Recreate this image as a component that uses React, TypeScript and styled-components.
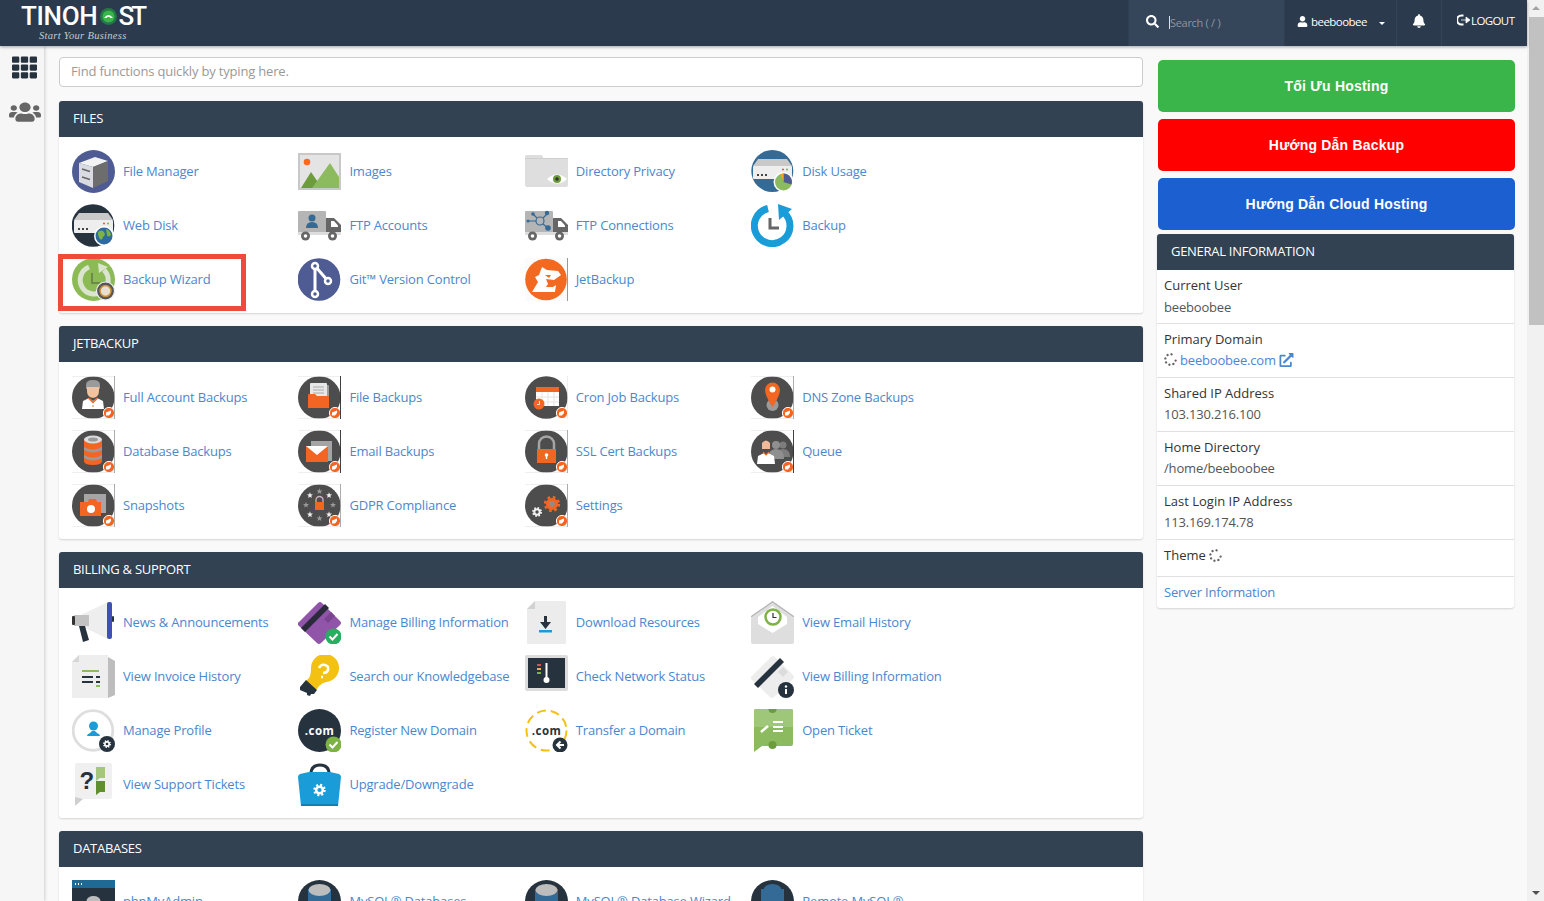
import React from "react";
import styled, { createGlobalStyle } from "styled-components";
import { FaTh, FaUsers, FaSearch, FaUser, FaBell, FaSpinner, FaExternalLinkAlt } from "react-icons/fa";

const GlobalStyle = createGlobalStyle`
  html, body { margin: 0; padding: 0; height: 100%; overflow: hidden; }
  body { font-family: "Open Sans", "Liberation Sans", sans-serif; font-size: 13px; letter-spacing: -0.18px; color: #333; background: #f9f9f9; }
  * { box-sizing: border-box; }
`;

/* ---------- icons ---------- */

const IconSvg = styled.svg`
  width: 43px;
  height: 43px;
  flex: none;
`;

const SvgText = styled.text<{ $dark?: boolean }>`
  font-family: "Open Sans", sans-serif;
  font-size: 11.5px;
  font-weight: 700;
  letter-spacing: 0.5px;
  text-anchor: middle;
  fill: ${(p) => (p.$dark ? "#26333f" : "#fff")};
`;

const SvgMark = styled.text`
  font-family: "Liberation Sans", sans-serif;
  font-size: 24px;
  font-weight: 700;
  fill: #26333f;
`;

const Ico = ({ children }: { children: React.ReactNode }) => (
  <IconSvg viewBox="0 0 43 43">{children}</IconSvg>
);

const Edge = ({ c = "#999" }: { c?: string }) => (
  <>
    <rect x="0" y="0" width="43" height="0.6" fill="#e4e4e4" />
    <rect x="0" y="42.4" width="43" height="0.6" fill="#e4e4e4" />
    <rect x="42.2" y="0" width="0.8" height="43" fill={c} />
  </>
);

const JetBadge = () => (
  <g>
    <circle cx="37" cy="37" r="5.6" fill="#f26522" stroke="#fff" strokeWidth="1" />
    <path d="M34 36.5 l5-2 v2.5 l-2 2.5 h-3z" fill="#fff" />
  </g>
);

const Dark = () => <circle cx="21.3" cy="21.5" r="21.3" fill="#4d4d4d" />;

const starPts = (cx: number, cy: number, r: number) =>
  Array.from({ length: 10 }, (_, i) => {
    const a = (Math.PI / 5) * i - Math.PI / 2;
    const d = i % 2 ? r * 0.42 : r;
    return `${cx + d * Math.cos(a)},${cy + d * Math.sin(a)}`;
  }).join(" ");

const Gear = ({ cx, cy, r, c, hole }: { cx: number; cy: number; r: number; c: string; hole: string }) => {
  const len = 2 * Math.PI * r;
  return (
    <g>
      <circle cx={cx} cy={cy} r={r} fill="none" stroke={c} strokeWidth={r * 0.5} strokeDasharray={`${len / 16} ${len / 16}`} />
      <circle cx={cx} cy={cy} r={r * 0.92} fill={c} />
      <circle cx={cx} cy={cy} r={r * 0.42} fill={hole} />
    </g>
  );
};

const Server = ({ top }: { top: string }) => (
  <g>
    <polygon points="7,9 36,9 41,16 2,16" fill="#c9c9c9" />
    <rect x="2" y="16" width="39" height="13" rx="1" fill={top} />
    <rect x="6" y="24" width="2" height="2" fill="#444" />
    <rect x="10" y="24" width="2" height="2" fill="#444" />
    <rect x="14" y="24" width="2" height="2" fill="#444" />
    <circle cx="32" cy="19.5" r="1" fill="#e0533d" />
    <circle cx="36" cy="19.5" r="1" fill="#7cb342" />
  </g>
);

const Truck = ({ children }: { children: React.ReactNode }) => (
  <g>
    <rect x="0" y="7" width="28" height="23" rx="1" fill="#b5b5b5" />
    <path d="M28 14h8l7 7v9H28z" fill="#666" />
    <path d="M33 17h3l4 4.5v1.5h-7z" fill="#fff" />
    <rect x="0" y="28" width="43" height="3" fill="#ddd" />
    <circle cx="7.5" cy="32" r="4.5" fill="#666" />
    <circle cx="7.5" cy="32" r="1.8" fill="#fff" />
    <circle cx="34.5" cy="32" r="4.5" fill="#666" />
    <circle cx="34.5" cy="32" r="1.8" fill="#fff" />
    {children}
  </g>
);

const Check = ({ c }: { c: string }) => (
  <g>
    <circle cx="35.5" cy="35.5" r="8" fill={c} />
    <path d="M31.5 35.5l3 3 5-5.5" fill="none" stroke="#fff" strokeWidth="2" />
  </g>
);

const DbCylinder = ({ remote }: { remote?: boolean }) => (
  <g>
    <circle cx="21.5" cy="21.5" r="21.5" fill="#26333f" />
    <path d="M10 9v18c0 6 23 6 23 0V9z" fill="#336a96" />
    <ellipse cx="21.5" cy="10" rx={remote ? 9 : 11} ry="6" fill={remote ? "#336a96" : "#bdbdbd"} />
    {remote && <circle cx="8" cy="34" r="7" fill="#e8743b" />}
  </g>
);

const icons: Record<string, React.ReactNode> = {
  fileManager: (
    <Ico>
      <circle cx="21.5" cy="21.5" r="21.5" fill="#4f5b93" />
      <polygon points="7,13 23,7 36,11 21,17" fill="#f2f2f2" />
      <polygon points="7,13 21,17 21,38 7,32" fill="#d9dae2" />
      <polygon points="21,17 36,11 36,31 21,38" fill="#6d6d6d" />
      <path d="M10 19l8 2.5M10 27l8 2.5" stroke="#666" strokeWidth="1.5" />
    </Ico>
  ),
  images: (
    <Ico>
      <rect x="0" y="3" width="43" height="37" fill="#c8c8c8" />
      <rect x="2" y="5" width="39" height="33" fill="#e4e4e4" />
      <circle cx="9" cy="12" r="3.3" fill="#f96a1b" />
      <polygon points="3,38 13,22 24,38" fill="#6d9c3d" />
      <polygon points="14,38 32,13 41,27 41,38" fill="#8bbb5e" />
    </Ico>
  ),
  directoryPrivacy: (
    <Ico>
      <path d="M0 7q0-2 2-2h14q2 0 2 3h23q2 0 2 2v25q0 2-2 2H2q-2 0-2-2z" fill="#dedede" />
      <rect x="0" y="8" width="43" height="1" fill="#cfcfcf" />
      <path d="M22 29q10-9 20 0-10 9-20 0z" fill="#fff" />
      <circle cx="32" cy="29" r="4" fill="#6d9c3d" />
      <circle cx="32" cy="29" r="1.8" fill="#333" />
    </Ico>
  ),
  diskUsage: (
    <Ico>
      <circle cx="21.3" cy="21" r="21" fill="#336a96" />
      <Server top="#eeeeee" />
      <circle cx="32.5" cy="32" r="10" fill="#fff" />
      <circle cx="32.5" cy="32" r="8.5" fill="#8bbb5e" />
      <path d="M32.5 32V23.5a8.5 8.5 0 0 1 8 11z" fill="#4f5b93" />
      <path d="M32.5 32V23.5l-3 .5z" fill="#f5a623" />
    </Ico>
  ),
  webDisk: (
    <Ico>
      <circle cx="21" cy="21.5" r="21.3" fill="#26333f" />
      <Server top="#eeeeee" />
      <circle cx="32" cy="32" r="10" fill="#fff" />
      <circle cx="32" cy="32" r="8.5" fill="#2d6a9f" />
      <path d="M26 28q4-3 6 0t-1 5q-1 4-3 2t-2-7zM34 25q4 1 5 6-3 3-4 0z" fill="#7cb342" />
    </Ico>
  ),
  ftpAccounts: (
    <Ico>
      <Truck>
        <circle cx="14" cy="14" r="3.5" fill="#336a96" />
        <path d="M8 24q0-6 6-6t6 6z" fill="#336a96" />
      </Truck>
    </Ico>
  ),
  ftpConnections: (
    <Ico>
      <Truck>
        <g stroke="#336a96" strokeWidth="1.2" fill="none">
          <circle cx="15" cy="17" r="4" />
          <path d="M3 17h8M8 10l4 4M22 10l-4 4M23 24l-5-4" />
        </g>
        <g fill="#336a96">
          <circle cx="3" cy="17" r="1.5" />
          <circle cx="8" cy="10" r="1.8" />
          <circle cx="22" cy="9" r="2.2" />
          <circle cx="23" cy="24" r="2.8" />
        </g>
      </Truck>
    </Ico>
  ),
  backup: (
    <Ico>
      <path d="M17 4.5A17.8 17.8 0 1 0 33 8.5" fill="none" stroke="#1a9cd9" strokeWidth="7" />
      <polygon points="27,0 41,5 28,16" fill="#1a9cd9" />
      <path d="M19 14v10h9" fill="none" stroke="#666" strokeWidth="3" />
    </Ico>
  ),
  backupWizard: (
    <Ico>
      <circle cx="21.5" cy="21.5" r="21.5" fill="#8cbb55" />
      <path d="M17 9A14 14 0 1 0 32 12" fill="none" stroke="#dbe4cf" strokeWidth="5" />
      <polygon points="26,5 36,9 27,15" fill="#dbe4cf" />
      <path d="M20 15v10h8" fill="none" stroke="#6d8a4b" strokeWidth="2" />
      <circle cx="33.5" cy="33" r="9" fill="#555" stroke="#eee" strokeWidth="1.2" />
      <circle cx="33.5" cy="33" r="5.5" fill="#eadfcc" stroke="#c98f3d" strokeWidth="1.5" />
    </Ico>
  ),
  git: (
    <Ico>
      <circle cx="21" cy="21.5" r="21.3" fill="#4f5b93" />
      <path d="M17 8v28M17 8l13 15" stroke="#fff" strokeWidth="3" fill="none" />
      <g fill="#4f5b93" stroke="#fff" strokeWidth="2.5">
        <circle cx="17" cy="8" r="3" />
        <circle cx="30" cy="23" r="3" />
        <circle cx="17" cy="36" r="3" />
      </g>
    </Ico>
  ),
  jetBackup: (
    <Ico>
      <rect x="0" y="0" width="43" height="43" fill="#fbfbfb" />
      <circle cx="21" cy="21.5" r="20.8" fill="#f26a21" />
      <path d="M17 9l5 3 11 1 3 4-7 5-8-1 2 5-2 3h7l3-2-1 7H7l6-10-3-5 4-2z" fill="#fff" />
      <path d="M20 17l6 0-2 3z" fill="#f26a21" />
      <rect x="42" y="0" width="1" height="43" fill="#999" />
    </Ico>
  ),
  fullAccount: (
    <Ico>
      <Dark />
      <path d="M14 9q0-5 7-5t7 5v4h-14z" fill="#9a9a9a" />
      <path d="M15 11h12v4q0 6-6 7-6-1-6-7z" fill="#f2c19d" />
      <path d="M10 33l1-8 6-3 4 3 4-3 6 3 1 8z" fill="#fff" />
      <path d="M17 21.5l4 4 4-4 1 1-5 5-5-5z" fill="#f26522" />
      <circle cx="21" cy="30" r=".8" fill="#f26522" />
      <JetBadge />
      <Edge />
    </Ico>
  ),
  fileBackups: (
    <Ico>
      <Dark />
      <rect x="14" y="9" width="17" height="16" rx="1" fill="#9d9d9d" />
      <rect x="12" y="7" width="17" height="18" rx="1" fill="#e8e8e8" />
      <path d="M15 11h11M15 14h11M15 17h11" stroke="#aaa" strokeWidth="1" />
      <path d="M10 19q0-1 1-1h6l2 2h12v12H10z" fill="#f26522" />
      <JetBadge />
      <Edge c="#111" />
    </Ico>
  ),
  database: (
    <Ico>
      <Dark />
      <path d="M12 9v22q0 4 9 4t9-4V9z" fill="#f26522" />
      <ellipse cx="21" cy="9.5" rx="9" ry="4" fill="#dcdcdc" />
      <ellipse cx="21" cy="9.5" rx="5" ry="2" fill="#9a9a9a" />
      <path d="M12 17q9 5 18 0v3q-9 5-18 0zM12 25q9 5 18 0v3q-9 5-18 0z" fill="#9a9a9a" />
      <JetBadge />
      <Edge />
    </Ico>
  ),
  email: (
    <Ico>
      <Dark />
      <rect x="13" y="11" width="21" height="20" fill="#a5a5a5" />
      <rect x="8" y="16" width="22" height="16" fill="#f26522" />
      <path d="M8 16h22l-11 9z" fill="#fff" />
      <JetBadge />
      <Edge c="#111" />
    </Ico>
  ),
  snapshots: (
    <Ico>
      <Dark />
      <rect x="12" y="10" width="22" height="19" fill="#a5a5a5" />
      <path d="M8 18h8l1-3h7l1 3h4v14H8z" fill="#f26522" />
      <circle cx="19" cy="25" r="4" fill="#fff" />
      <JetBadge />
      <Edge />
    </Ico>
  ),
  gdpr: (
    <Ico>
      <Dark />
      {Array.from({ length: 8 }, (_, i) => {
        const a = (Math.PI / 4) * i;
        return <polygon key={i} points={starPts(21.5 + 13.5 * Math.cos(a), 21 + 13.5 * Math.sin(a), 3.2)} fill={i === 1 || i === 3 || i === 5 || i === 7 ? "#eee" : "#9a9a9a"} />;
      })}
      <path d="M18 18v-2a3.5 3.5 0 0 1 7 0v2" fill="none" stroke="#bbb" strokeWidth="1.3" />
      <rect x="17" y="18" width="9" height="8" fill="#f26522" />
      <JetBadge />
      <Edge />
    </Ico>
  ),
  cron: (
    <Ico>
      <Dark />
      <rect x="11" y="11" width="23" height="19" fill="#fff" />
      <rect x="11" y="11" width="23" height="5" fill="#f26522" />
      <path d="M11 21h23M11 26h23M17 16v14M23 16v14M29 16v14" stroke="#e5e5e5" strokeWidth="1" />
      <circle cx="14" cy="28" r="5.5" fill="#f26522" />
      <path d="M14.5 25v3.5h-2.5" fill="none" stroke="#fff" strokeWidth=".8" />
      <JetBadge />
      <rect x="42.5" y="0" width=".5" height="43" fill="#ddd" />
    </Ico>
  ),
  ssl: (
    <Ico>
      <Dark />
      <path d="M14 20v-6a7.5 7.5 0 0 1 15 0v6" fill="none" stroke="#a5a5a5" strokeWidth="2.5" />
      <rect x="12" y="19" width="19" height="14" fill="#f26522" />
      <circle cx="21.5" cy="25" r="1.8" fill="#fff" />
      <rect x="20.8" y="25" width="1.4" height="4" fill="#fff" />
      <JetBadge />
      <Edge />
    </Ico>
  ),
  settings: (
    <Ico>
      <Dark />
      <Gear cx={27} cy={20} r={6.5} c="#f26522" hole="#8d8d8d" />
      <Gear cx={12} cy={28} r={4} c="#f2f2f2" hole="#4d4d4d" />
      <JetBadge />
      <Edge />
    </Ico>
  ),
  dns: (
    <Ico>
      <Dark />
      <circle cx="21.5" cy="29" r="6" fill="#9a9a9a" />
      <path d="M21.5 31q-7.5-11-7.5-17a7.5 7.5 0 0 1 15 0q0 6-7.5 17z" fill="#f26522" />
      <circle cx="21.5" cy="13.5" r="3" fill="#fff" />
      <JetBadge />
      <Edge />
    </Ico>
  ),
  queue: (
    <Ico>
      <Dark />
      <circle cx="32" cy="15" r="3.5" fill="#7d7d7d" />
      <path d="M25 27q0-8 7-8t7 8z" fill="#7d7d7d" />
      <circle cx="25" cy="15" r="4" fill="#8f8f8f" />
      <path d="M17 29q0-10 8-10t8 10z" fill="#8f8f8f" />
      <path d="M11 13q4-5 8 0v6h-8z" fill="#f0b999" />
      <path d="M6 34l1-8 6-3 2 2 2-2 6 3 1 8z" fill="#fff" />
      <path d="M12 22l3 3 3-3" fill="none" stroke="#f26522" strokeWidth="1.2" />
      <JetBadge />
      <Edge c="#111" />
    </Ico>
  ),
  news: (
    <Ico>
      <path d="M9 14L36 1v37L9 25z" fill="#eeeeee" />
      <rect x="2" y="14" width="15" height="11" fill="#c2c2c2" />
      <rect x="0" y="15" width="3" height="9" rx="1" fill="#333" />
      <rect x="35" y="1" width="5" height="37" rx="2" fill="#3f51b5" />
      <rect x="40" y="15" width="2" height="6" rx="1" fill="#26333f" />
      <path d="M7 25h6l4 14-6 2z" fill="#26333f" />
    </Ico>
  ),
  billing: (
    <Ico>
      <path d="M0 24q-1-2 1-3L20 2q2-2 4 0l18 18q2 2 0 4L23 42q-2 2-4 0z" fill="#9055a8" />
      <path d="M3 27L27 3l4 4L7 31z" fill="#2a2a3a" />
      <path d="M26 18l7-7 4 4-7 7z" fill="#7a4490" />
      <Check c="#27ae60" />
    </Ico>
  ),
  invoice: (
    <Ico>
      <path d="M7 0h29v43H0V7z" fill="#eeeeee" />
      <path d="M0 7h7V0z" fill="#d6d6d6" />
      <path d="M36 2l7 4v34l-7 3z" fill="#bdbdbd" />
      <rect x="10" y="15" width="17" height="2" fill="#8bbb5e" />
      <rect x="10" y="21" width="11" height="2" fill="#26333f" />
      <rect x="24" y="21" width="4" height="2" fill="#26333f" />
      <rect x="10" y="26" width="11" height="2" fill="#26333f" />
      <rect x="24" y="26" width="4" height="2" fill="#26333f" />
      <rect x="24" y="30" width="4" height="2" fill="#8bbb5e" />
    </Ico>
  ),
  bulb: (
    <Ico>
      <path d="M13 13A14 14 0 1 1 28 27q-4 1-7 4l-3 4-10-9 3-3q2-3 2-10z" fill="#f2c111" />
      <path d="M8 25l11 10-3 4-3 0-1 2-3-1 0-2-7-3 0-3z" fill="#26333f" />
      <path d="M21 13q2-4 6-3t3 5q-1 3-5 3M23 22h2" fill="none" stroke="#fff" strokeWidth="2.5" />
    </Ico>
  ),
  profile: (
    <Ico>
      <circle cx="21" cy="21.5" r="19.8" fill="none" stroke="#dedede" strokeWidth="2.8" />
      <circle cx="21.5" cy="17" r="4.5" fill="#1a9cd9" />
      <path d="M15 27q0-2 3-3l2-2h3l2 2q3 1 3 3z" fill="#1a9cd9" />
      <circle cx="35" cy="35" r="8" fill="#26333f" />
      <Gear cx={35} cy={35} r={3.2} c="#fff" hole="#26333f" />
    </Ico>
  ),
  register: (
    <Ico>
      <circle cx="21.5" cy="21.5" r="21.5" fill="#26333f" />
      <SvgText x="21.5" y="25.5">.com</SvgText>
      <Check c="#7cb342" />
    </Ico>
  ),
  ticket: (
    <Ico>
      <rect x="3" y="0" width="37" height="36" rx="2" fill="#f0f0f0" />
      <path d="M3 34v9l8-7z" fill="#cfcfcf" />
      <SvgMark x="7.5" y="26">?</SvgMark>
      <path d="M24 4h9v11h-5l-4 3z" fill="#a4c77d" />
      <path d="M24 18h9v11h-5l-4 3z" fill="#5f8f2f" />
    </Ico>
  ),
  bag: (
    <Ico>
      <path d="M13 11q0-9 9-9t9 9" fill="none" stroke="#26333f" strokeWidth="3" />
      <path d="M0 14q0-2 2-3l9-2h21l9 2q2 1 2 3l-3 29H3z" fill="#1a9cd9" />
      <rect x="3" y="41" width="37" height="2" fill="#157fb2" />
      <Gear cx={21.5} cy={27} r={5} c="#fff" hole="#1a9cd9" />
    </Ico>
  ),
  download: (
    <Ico>
      <path d="M10 0h30q1 0 1 1v41q0 1-1 1H3q-1 0-1-1V8z" fill="#ececec" />
      <path d="M2 8l8-8v8z" fill="#d2d2d2" />
      <path d="M19 15h3v6h4l-5.5 7-5.5-7h4z" fill="#26333f" />
      <rect x="14" y="29" width="13" height="2.5" fill="#1a9cd9" />
    </Ico>
  ),
  emailHistory: (
    <Ico>
      <path d="M0 17L21.5 2 43 17v24q0 2-2 2H2q-2 0-2-2z" fill="#dedede" />
      <path d="M7 16L21.5 5 36 16v7L21.5 32 7 23z" fill="#fff" />
      <path d="M0 16L21.5 1 43 16" fill="none" stroke="#b5b5b5" strokeWidth="1.5" />
      <circle cx="22" cy="16" r="7.5" fill="none" stroke="#7cb342" strokeWidth="2.5" />
      <path d="M22 12v4.5h3.5" fill="none" stroke="#333" strokeWidth="1.2" />
    </Ico>
  ),
  network: (
    <Ico>
      <rect x="0" y="0" width="43" height="36" rx="2" fill="#dcdcdc" />
      <rect x="3" y="3" width="37" height="30" fill="#26333f" />
      <rect x="12" y="9" width="4" height="2" fill="#d9534f" />
      <rect x="12" y="13" width="4" height="2" fill="#f0ad4e" />
      <rect x="12" y="17" width="4" height="2" fill="#7cb342" />
      <rect x="20.5" y="8" width="2" height="16" fill="#fff" />
      <circle cx="21.5" cy="25" r="3" fill="#fff" />
    </Ico>
  ),
  billingInfo: (
    <Ico>
      <path d="M0 24q-1-2 1-3L20 2q2-2 4 0l18 18q2 2 0 4L23 42q-2 2-4 0z" fill="#ededed" />
      <path d="M3 29L29 3l4 4L7 33z" fill="#26333f" />
      <path d="M27 17l5-5 5 5-5 5z" fill="#dcdcdc" />
      <circle cx="35" cy="35" r="8" fill="#26333f" />
      <rect x="34" y="34" width="2" height="5" fill="#fff" />
      <circle cx="35" cy="31.5" r="1.2" fill="#fff" />
    </Ico>
  ),
  transfer: (
    <Ico>
      <circle cx="21.5" cy="21.5" r="20" fill="none" stroke="#f2c111" strokeWidth="2" strokeDasharray="9 5" />
      <SvgText x="21.5" y="25.5" $dark>.com</SvgText>
      <circle cx="35" cy="36" r="7.5" fill="#26333f" />
      <path d="M39 36h-6M35.5 32.5L32 36l3.5 3.5" fill="none" stroke="#fff" strokeWidth="2" />
    </Ico>
  ),
  openTicket: (
    <Ico>
      <path d="M3 2q0-2 2-2h35q2 0 2 2v33q0 2-2 2H11l-8 6z" fill="#8bbb5e" />
      <path d="M3 2q0-2 2-2h35q2 0 2 2v16H3z" fill="#9fc77a" />
      <path d="M10 23l7-6" stroke="#fff" strokeWidth="2.5" />
      <path d="M22 13h10M22 18h10M22 22h10" stroke="#fff" strokeWidth="1.8" />
      <circle cx="21.5" cy="0" r="4" fill="#6d9c3d" />
      <circle cx="21.5" cy="36" r="4" fill="#6d9c3d" />
    </Ico>
  ),
  phpMyAdmin: (
    <Ico>
      <rect x="0" y="0" width="43" height="43" fill="#26333f" />
      <rect x="0" y="0" width="43" height="8" fill="#1f6a94" />
      <path d="M3 4h1M6 4h1M9 4h1" stroke="#fff" strokeWidth="2" />
      <ellipse cx="21.5" cy="21" rx="7" ry="5" fill="#bdbdbd" />
    </Ico>
  ),
  mysql: <Ico><DbCylinder /></Ico>,
  mysqlWizard: <Ico><DbCylinder /></Ico>,
  remoteMysql: <Ico><DbCylinder remote /></Ico>,
};

/* ---------- data ---------- */

type Item = { label: string; icon: string; marked?: boolean };

const sections: { title: string; pad?: number; items: Item[] }[] = [
  {
    title: "Files",
    items: [
      { label: "File Manager", icon: "fileManager" },
      { label: "Images", icon: "images" },
      { label: "Directory Privacy", icon: "directoryPrivacy" },
      { label: "Disk Usage", icon: "diskUsage" },
      { label: "Web Disk", icon: "webDisk" },
      { label: "FTP Accounts", icon: "ftpAccounts" },
      { label: "FTP Connections", icon: "ftpConnections" },
      { label: "Backup", icon: "backup" },
      { label: "Backup Wizard", icon: "backupWizard", marked: true },
      { label: "Git™ Version Control", icon: "git" },
      { label: "JetBackup", icon: "jetBackup" },
    ],
  },
  {
    title: "JetBackup",
    pad: 14,
    items: [
      { label: "Full Account Backups", icon: "fullAccount" },
      { label: "File Backups", icon: "fileBackups" },
      { label: "Cron Job Backups", icon: "cron" },
      { label: "DNS Zone Backups", icon: "dns" },
      { label: "Database Backups", icon: "database" },
      { label: "Email Backups", icon: "email" },
      { label: "SSL Cert Backups", icon: "ssl" },
      { label: "Queue", icon: "queue" },
      { label: "Snapshots", icon: "snapshots" },
      { label: "GDPR Compliance", icon: "gdpr" },
      { label: "Settings", icon: "settings" },
    ],
  },
  {
    title: "Billing & Support",
    items: [
      { label: "News & Announcements", icon: "news" },
      { label: "Manage Billing Information", icon: "billing" },
      { label: "Download Resources", icon: "download" },
      { label: "View Email History", icon: "emailHistory" },
      { label: "View Invoice History", icon: "invoice" },
      { label: "Search our Knowledgebase", icon: "bulb" },
      { label: "Check Network Status", icon: "network" },
      { label: "View Billing Information", icon: "billingInfo" },
      { label: "Manage Profile", icon: "profile" },
      { label: "Register New Domain", icon: "register" },
      { label: "Transfer a Domain", icon: "transfer" },
      { label: "Open Ticket", icon: "openTicket" },
      { label: "View Support Tickets", icon: "ticket" },
      { label: "Upgrade/Downgrade", icon: "bag" },
    ],
  },
  {
    title: "Databases",
    items: [
      { label: "phpMyAdmin", icon: "phpMyAdmin" },
      { label: "MySQL® Databases", icon: "mysql" },
      { label: "MySQL® Database Wizard", icon: "mysqlWizard" },
      { label: "Remote MySQL®", icon: "remoteMysql" },
    ],
  },
];

const guideButtons = [
  { text: "Tối Ưu Hosting", color: "#39b54a" },
  { text: "Hướng Dẫn Backup", color: "#ff0000" },
  { text: "Hướng Dẫn Cloud Hosting", color: "#1c5fd1" },
];

/* ---------- app ---------- */

export default function App() {
  return (
    <>
      <GlobalStyle />
      <Page>
        <Main>
          <Header>
            <Logo>
              <LogoWord>
                TINOH
                <svg width="17" height="17" viewBox="0 0 17 17">
                  <circle cx="8.5" cy="8.5" r="8.5" fill="#1f7a45" />
                  <circle cx="8.5" cy="8.5" r="6" fill="#39b54a" />
                  <path d="M4 10q4.5-6 9 0h-2.5q-2-2.5-4 0z" fill="#fff" />
                </svg>
                <LogoEnd>ST</LogoEnd>
              </LogoWord>
              <LogoTag>Start Your Business</LogoTag>
            </Logo>
            <HeaderSpacer />
            <SearchBox>
              <FaSearch size={13} color="#fff" />
              <Caret />
              <SearchHint>Search ( / )</SearchHint>
            </SearchBox>
            <UserMenu>
              <FaUser size={11} />
              <span>beeboobee</span>
              <DropCaret />
            </UserMenu>
            <BellCell>
              <FaBell size={14} />
            </BellCell>
            <LogoutCell>
              <svg width="13" height="12" viewBox="0 0 13 12">
                <path d="M6.5 1.5H4.5a4.5 4.5 0 0 0 0 9h2" fill="none" stroke="#fff" strokeWidth="2.2" />
                <path d="M4 6h5V3l4 3-4 3V6" fill="#fff" stroke="#fff" strokeWidth=".8" />
              </svg>
              <span>LOGOUT</span>
            </LogoutCell>
          </Header>
          <Body>
            <Sidebar>
              <GridIcon />
              <UsersIcon preserveAspectRatio="none" />
            </Sidebar>
            <Content>
              <LeftColumn>
                <FindInput placeholder="Find functions quickly by typing here." />
                {sections.map((s) => (
                  <Panel key={s.title}>
                    <PanelHead>{s.title}</PanelHead>
                    <ItemGrid $pad={s.pad ?? 13}>
                      {s.items.map((it) => (
                        <ItemRow key={it.label}>
                          {icons[it.icon]}
                          <ItemLabel>{it.label}</ItemLabel>
                          {it.marked && <Highlight />}
                        </ItemRow>
                      ))}
                    </ItemGrid>
                  </Panel>
                ))}
              </LeftColumn>
              <RightColumn>
                {guideButtons.map((b) => (
                  <GuideButton key={b.text} $color={b.color}>
                    {b.text}
                  </GuideButton>
                ))}
                <InfoPanel>
                  <PanelHead>General Information</PanelHead>
                  <InfoRow>
                    <InfoLabel>Current User</InfoLabel>
                    <InfoValue>beeboobee</InfoValue>
                  </InfoRow>
                  <InfoRow>
                    <InfoLabel>Primary Domain</InfoLabel>
                    <InfoValue>
                      <SpinIcon />
                      <InfoLink>beeboobee.com</InfoLink>
                      <ExternalIcon />
                    </InfoValue>
                  </InfoRow>
                  <InfoRow>
                    <InfoLabel>Shared IP Address</InfoLabel>
                    <InfoValue>103.130.216.100</InfoValue>
                  </InfoRow>
                  <InfoRow>
                    <InfoLabel>Home Directory</InfoLabel>
                    <InfoValue>/home/beeboobee</InfoValue>
                  </InfoRow>
                  <InfoRow>
                    <InfoLabel>Last Login IP Address</InfoLabel>
                    <InfoValue>113.169.174.78</InfoValue>
                  </InfoRow>
                  <ThemeRow>
                    <InfoLabel>Theme</InfoLabel>
                    <SpinIcon />
                  </ThemeRow>
                  <ServerRow>
                    <InfoLink>Server Information</InfoLink>
                  </ServerRow>
                </InfoPanel>
              </RightColumn>
            </Content>
          </Body>
        </Main>
        <ScrollTrack>
          <ArrowUp />
          <Thumb />
          <TrackRest />
          <ArrowDown />
        </ScrollTrack>
      </Page>
    </>
  );
}

/* ---------- styles ---------- */

const Page = styled.div`
  display: flex;
  height: 901px;
  width: 1544px;
  overflow: hidden;
`;

const Main = styled.div`
  width: 1527px;
  display: flex;
  flex-direction: column;
  background: #f9f9f9;
`;

const Header = styled.header`
  height: 46px;
  flex: none;
  display: flex;
  background: #2b3a4c;
  color: #fff;
  box-shadow: 0 1px 3px rgba(0, 0, 0, 0.35);
  position: relative;
  z-index: 2;
`;

const Logo = styled.div`
  padding-left: 21px;
  width: 160px;
`;

const LogoWord = styled.div`
  display: flex;
  align-items: center;
  height: 32px;
  font-family: Roboto, sans-serif;
  font-size: 26px;
  font-weight: 500;
  color: #fff;
  letter-spacing: -0.3px;

  svg {
    margin: 0 2px 0 2px;
    flex: none;
  }
`;

const LogoEnd = styled.span`
  letter-spacing: -3px;
`;

const LogoTag = styled.div`
  margin: -2px 0 0 18px;
  font-family: "Liberation Serif", serif;
  font-style: italic;
  font-size: 10.5px;
  letter-spacing: 0.3px;
  line-height: 12px;
  white-space: nowrap;
  color: #c6ccd2;
`;

const HeaderSpacer = styled.div`
  flex: 1;
`;

const SearchBox = styled.div`
  width: 157px;
  display: flex;
  align-items: center;
  padding: 0 0 1px 17px;
  background: #36465a;
  border-left: 1px solid #2f3e50;
  border-right: 1px solid #2f3e50;

  svg {
    margin-bottom: 3px;
  }
`;

const Caret = styled.span`
  width: 1px;
  height: 13px;
  margin-left: 10px;
  background: #dfe3e8;
`;

const SearchHint = styled.span`
  font-size: 11px;
  letter-spacing: -0.3px;
  color: #8b95a1;
`;

const UserMenu = styled.div`
  width: 112px;
  display: flex;
  align-items: center;
  padding: 0 0 3px 12px;
  font-size: 11.5px;
  letter-spacing: -0.55px;
  border-right: 1px solid #354557;

  span {
    margin-left: 3px;
  }
`;

const DropCaret = styled.i`
  margin-left: 12px;
  margin-top: 4px;
  border-left: 3px solid transparent;
  border-right: 3px solid transparent;
  border-top: 3px solid #fff;
`;

const BellCell = styled.div`
  width: 45px;
  display: flex;
  align-items: center;
  justify-content: center;
  padding-bottom: 5px;
  border-right: 1px solid #354557;
`;

const LogoutCell = styled.div`
  width: 85px;
  display: flex;
  align-items: center;
  padding: 0 0 6px 15px;
  font-size: 11.5px;
  letter-spacing: -0.6px;

  span {
    margin-left: 1px;
  }
`;

const Body = styled.div`
  flex: 1;
  display: flex;
  min-height: 0;
`;

const Sidebar = styled.aside`
  width: 44px;
  flex: none;
  display: flex;
  flex-direction: column;
  align-items: center;
  padding: 8px 0 0 5px;
  background: #f6f6f6;
  box-shadow: 1px 0 3px rgba(0, 0, 0, 0.18);
`;

const GridIcon = styled(FaTh)`
  width: 25px;
  height: 27px;
  flex: none;
  color: #26333f;
`;

const UsersIcon = styled(FaUsers)`
  width: 32px;
  height: 22px;
  flex: none;
  margin-top: 20px;
  color: #666;
`;

const Content = styled.main`
  flex: 1;
  display: flex;
  min-width: 0;
  overflow: hidden;
  padding-left: 15px;
`;

const LeftColumn = styled.div`
  width: 1084px;
  flex: none;
  padding-top: 11px;
`;

const FindInput = styled.input`
  display: block;
  width: 100%;
  height: 30px;
  margin-bottom: 14px;
  padding: 0 11px 2px;
  border: 1px solid #ccc;
  border-radius: 4px;
  background: #fff;
  font: 13px "Open Sans", sans-serif;
  letter-spacing: -0.18px;

  &::placeholder {
    color: #999;
    opacity: 1;
  }
`;

const Panel = styled.section`
  margin-bottom: 13px;
  background: #fff;
  border-radius: 3px;
  box-shadow: 0 1px 2px rgba(0, 0, 0, 0.15);
`;

const PanelHead = styled.h2`
  margin: 0;
  height: 36px;
  padding: 0 0 2px 14px;
  display: flex;
  align-items: center;
  background: #334253;
  border-radius: 3px 3px 0 0;
  color: #fff;
  font-size: 13px;
  font-weight: 400;
  letter-spacing: -0.28px;
  text-transform: uppercase;
`;

const ItemGrid = styled.div<{ $pad: number }>`
  display: grid;
  grid-template-columns: repeat(4, 226.4px);
  padding: ${(p) => p.$pad}px 0 1px 13px;
`;

const ItemRow = styled.div`
  position: relative;
  display: flex;
  align-items: center;
  gap: 8px;
  height: 43px;
  margin-bottom: 11px;
`;

const ItemLabel = styled.a`
  color: #4a87cf;
  font-size: 13px;
  white-space: nowrap;
  padding-bottom: 2px;
`;

const Highlight = styled.div`
  position: absolute;
  left: -14px;
  top: -4px;
  width: 188px;
  height: 57px;
  border: 5px solid #ee4b3c;
`;

const RightColumn = styled.div`
  width: 358px;
  flex: none;
  margin-left: 14px;
  padding-top: 14px;
`;

const GuideButton = styled.div<{ $color: string }>`
  height: 52px;
  margin: 0 0 7px 1px;
  width: 357px;
  display: flex;
  align-items: center;
  justify-content: center;
  border-radius: 5px;
  background: ${(p) => p.$color};
  color: #fff;
  font-family: "Liberation Sans", sans-serif;
  font-size: 14px;
  font-weight: 700;
  letter-spacing: 0.2px;
`;

const InfoPanel = styled.section`
  width: 357px;
  margin-top: -3px;
  background: #fff;
  border-radius: 3px;
  box-shadow: 0 1px 2px rgba(0, 0, 0, 0.15);
`;

const InfoRow = styled.div`
  padding: 4px 7px 6px;
  border-bottom: 1px solid #e0e0e0;

  & + & {
    padding-bottom: 7px;
  }

  & + & > div + div {
    margin-top: -1px;
  }
`;

const ThemeRow = styled(InfoRow)`
  display: flex;
  align-items: flex-start;
  gap: 3px;
  height: 37px;
  padding-bottom: 0;

  svg {
    margin-top: 5px;
    margin-right: 0;
  }
`;

const ServerRow = styled.div`
  height: 31px;
  padding: 4px 7px 0;
  line-height: 22px;
`;

const InfoLabel = styled.div`
  line-height: 22px;
  letter-spacing: 0;
  color: #333;
`;

const InfoValue = styled.div`
  display: flex;
  align-items: center;
  height: 21px;
  color: #555;
`;

const InfoLink = styled.a`
  color: #4a87cf;
`;

const SpinIcon = styled(FaSpinner)`
  width: 13px;
  height: 13px;
  margin-right: 3px;
  color: #666;
  transform: rotate(12deg);
`;

const ExternalIcon = styled(FaExternalLinkAlt)`
  width: 15px;
  height: 14px;
  margin-left: 3px;
  color: #4a87cf;
`;

const ScrollTrack = styled.div`
  width: 17px;
  flex: none;
  display: flex;
  flex-direction: column;
  background: #f1f1f1;
`;

const ArrowUp = styled.div`
  height: 17px;
  flex: none;
  position: relative;

  &::after {
    content: "";
    position: absolute;
    left: 5px;
    top: 6px;
    border-left: 4px solid transparent;
    border-right: 4px solid transparent;
    border-bottom: 4px solid #a3a3a3;
  }
`;

const ArrowDown = styled.div`
  height: 17px;
  flex: none;
  position: relative;

  &::after {
    content: "";
    position: absolute;
    left: 5px;
    top: 7px;
    border-left: 4px solid transparent;
    border-right: 4px solid transparent;
    border-top: 4px solid #505050;
  }
`;

const Thumb = styled.div`
  height: 308px;
  flex: none;
  margin-left: 2px;
  background: #c1c1c1;
`;

const TrackRest = styled.div`
  flex: 1;
`;
